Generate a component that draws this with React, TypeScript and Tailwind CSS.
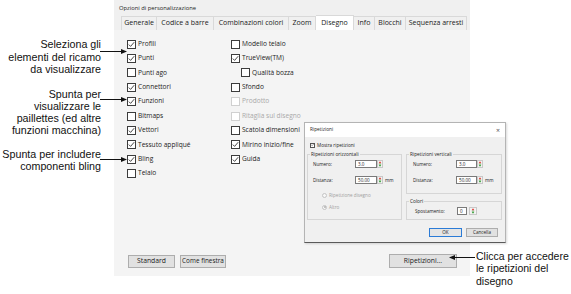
import React from 'react'

type CheckProps = { label: string; checked?: boolean; disabled?: boolean; indent?: boolean }

function Check({ label, checked = false, disabled = false, indent = false }: CheckProps) {
  return (
    <div className={`flex h-[14.4px] items-center ${indent ? 'pl-[10px]' : ''}`}>
      <span
        className={`flex h-[9px] w-[9px] shrink-0 items-center justify-center border bg-white ${
          disabled ? 'border-[#d0d0d0]' : 'border-[#3c3c3c]'
        }`}
      >
        {checked && (
          <svg width="7" height="7" viewBox="0 0 7 7">
            <polyline points="0.8,3.6 2.6,5.4 6.2,1.2" fill="none" stroke="#333" strokeWidth="0.9" />
          </svg>
        )}
      </span>
      <span className={`ml-[2px] whitespace-nowrap text-[6.6px] leading-none ${disabled ? 'text-[#a9a9a9]' : 'text-[#1c1c1c]'}`}>
        {label}
      </span>
    </div>
  )
}

function Spin({ wide = false }: { wide?: boolean }) {
  return (
    <span
      className={`flex h-[8px] flex-col items-center justify-center border border-[#c8c8c8] bg-[#f3f3f3] ${
        wide ? 'w-[8px]' : 'w-[6px]'
      }`}
    >
      <svg width="4" height="7" viewBox="0 0 4 7">
        <polygon points="2,0.3 3.6,2.6 0.4,2.6" fill="#e0302a" />
        <rect x="1.6" y="2.6" width="0.8" height="1.8" fill="#3a9a3a" />
        <polygon points="0.4,4.4 3.6,4.4 2,6.7" fill="#2e9a2e" />
      </svg>
    </span>
  )
}

function Field({ value, w }: { value: string; w: string }) {
  return (
    <span className={`flex h-[8px] items-center border border-[#7a7a7a] bg-white pl-[2px] text-[4.6px] text-[#222] ${w}`}>
      {value}
    </span>
  )
}

function Radio({ label, checked = false }: { label: string; checked?: boolean }) {
  return (
    <div className="flex h-[8px] items-center pl-[14px]">
      <span className="flex h-[5px] w-[5px] items-center justify-center rounded-full border border-[#c4c4c4] bg-[#f7f7f7]">
        {checked && <span className="h-[2px] w-[2px] rounded-full bg-[#b0b0b0]" />}
      </span>
      <span className="ml-[2px] text-[4.6px] text-[#a0a0a0]">{label}</span>
    </div>
  )
}

const tabs = [
  { name: 'Generale', w: 'w-[36px]' },
  { name: 'Codice a barre', w: 'w-[57px]' },
  { name: 'Combinazioni colori', w: 'w-[75px]' },
  { name: 'Zoom', w: 'w-[27px]' },
  { name: 'Disegno', w: 'w-[38px]', active: true },
  { name: 'Info', w: 'w-[21px]' },
  { name: 'Blocchi', w: 'w-[31px]' },
  { name: 'Sequenza arresti', w: 'w-[61px]' },
]

function RepeatsDialog() {
  return (
    <div className="absolute left-[190px] top-[122px] flex h-[121px] w-[202px] flex-col border border-[#b4b4b4] border-b-[#5a5a5a] font-['Open_Sans',sans-serif] shadow-[1px_1px_2px_rgba(0,0,0,0.15)]">
      {/* title bar */}
      <div className="flex h-[14px] items-center justify-between bg-white pl-[5px] pr-[5px]">
        <span className="text-[4.8px] text-[#222]">Ripetizioni</span>
        <span className="text-[7px] leading-none text-[#555]">×</span>
      </div>

      <div className="flex flex-1 flex-col bg-[#f0f0f0] px-[2px]">
        <div className="mt-[4px] flex h-[8px] items-center pl-[3px]">
          <span className="flex h-[5px] w-[5px] items-center justify-center border border-[#555] bg-white">
            <svg width="4" height="4" viewBox="0 0 4 4">
              <polyline points="0.4,2 1.5,3.1 3.6,0.7" fill="none" stroke="#333" strokeWidth="0.6" />
            </svg>
          </span>
          <span className="ml-[2px] text-[4.6px] text-[#222]">Mostra ripetizioni</span>
        </div>

        <div className="mt-[2px] flex">
          <fieldset className="h-[69px] w-[95px] border border-[#d6d6d6]">
            <legend className="ml-[2px] px-[1px] text-[4.8px] leading-[6px] text-[#222]">Ripetizioni orizzontali</legend>
            <div className="mt-[3px] flex h-[8px] items-center">
              <span className="w-[47px] pl-[5px] text-[4.6px] text-[#222]">Numero:</span>
              <Field value="3.0" w="w-[22px]" />
              <Spin />
            </div>
            <div className="mt-[8px] flex h-[8px] items-center">
              <span className="w-[47px] pl-[5px] text-[4.6px] text-[#222]">Distanza:</span>
              <Field value="50.00" w="w-[22px]" />
              <Spin />
              <span className="ml-[2px] text-[4.6px] text-[#222]">mm</span>
            </div>
            <div className="mt-[7px]">
              <Radio label="Ripetizione disegno" />
            </div>
            <div className="mt-[4px]">
              <Radio label="Altro" checked />
            </div>
          </fieldset>

          <div className="ml-[4px] flex w-[96px] flex-col">
            <fieldset className="h-[43px] border border-[#d6d6d6]">
              <legend className="ml-[2px] px-[1px] text-[4.8px] leading-[6px] text-[#222]">Ripetizioni verticali</legend>
              <div className="mt-[3px] flex h-[8px] items-center">
                <span className="w-[49px] pl-[6px] text-[4.6px] text-[#222]">Numero:</span>
                <Field value="3.0" w="w-[21px]" />
                <Spin />
              </div>
              <div className="mt-[8px] flex h-[8px] items-center">
                <span className="w-[49px] pl-[6px] text-[4.6px] text-[#222]">Distanza:</span>
                <Field value="50.00" w="w-[21px]" />
                <Spin />
                <span className="ml-[2px] text-[4.6px] text-[#222]">mm</span>
              </div>
            </fieldset>
            <fieldset className="mt-[4px] h-[22px] border border-[#d6d6d6]">
              <legend className="ml-[2px] px-[1px] text-[4.8px] leading-[6px] text-[#222]">Colori</legend>
              <div className="mt-[3px] flex h-[8px] items-center">
                <span className="w-[50px] pl-[8px] text-[4.6px] text-[#222]">Spostamento:</span>
                <Field value="0" w="w-[10px]" />
                <span className="ml-[2px]">
                  <Spin wide />
                </span>
              </div>
            </fieldset>
          </div>
        </div>

        <div className="mt-[8px] flex justify-end pr-[5px]">
          <span className="flex h-[9px] w-[33px] items-center justify-center border border-[#2b7bd6] bg-[#e5e5e5] text-[4.6px] text-[#222]">
            OK
          </span>
          <span className="ml-[4px] flex h-[9px] w-[32px] items-center justify-center border border-[#adadad] bg-[#e1e1e1] text-[4.6px] text-[#222]">
            Cancella
          </span>
        </div>
      </div>
    </div>
  )
}

export default function App() {
  const left: CheckProps[] = [
    { label: 'Profili', checked: true },
    { label: 'Punti', checked: true },
    { label: 'Punti ago' },
    { label: 'Connettori', checked: true },
    { label: 'Funzioni', checked: true },
    { label: 'Bitmaps' },
    { label: 'Vettori', checked: true },
    { label: 'Tessuto appliqué', checked: true },
    { label: 'Bling', checked: true },
    { label: 'Telaio' },
  ]
  const right: CheckProps[] = [
    { label: 'Modello telaio' },
    { label: 'TrueView(TM)', checked: true },
    { label: 'Qualità bozza', indent: true },
    { label: 'Sfondo' },
    { label: 'Prodotto', disabled: true },
    { label: 'Ritaglia sul disegno', disabled: true },
    { label: 'Scatola dimensioni' },
    { label: 'Mirino inizio/fine', checked: true },
    { label: 'Guida', checked: true },
  ]

  return (
    <div className="relative flex h-[294px] w-[571px] overflow-hidden bg-white">
      {/* Left callouts */}
      <div className="flex w-[114px] flex-col items-end pr-[13px] pt-[38px] text-right font-['Liberation_Sans',Arial,sans-serif] text-[10.7px] leading-[12.5px] text-[#111]">
        <p>
          Seleziona gli
          <br />
          elementi del ricamo
          <br />
          da visualizzare
        </p>
        <p className="mt-[12px] leading-[12px]">
          Spunta per
          <br />
          visualizzare le
          <br />
          paillettes (ed altre
          <br />
          funzioni macchina)
        </p>
        <p className="mt-[12px]">
          Spunta per includere
          <br />
          componenti bling
        </p>
      </div>

      {/* Main dialog */}
      <div className="relative flex h-[276px] w-[356px] flex-col bg-[#f0f0f0] font-['Open_Sans',sans-serif]">
        <div className="flex h-[16px] items-center pl-[5px] text-[5.8px] text-[#222]">Opzioni di personalizzazione</div>
        <div className="ml-[7px] flex h-[14px] w-[346px] border-b border-[#d9d9d9]">
          {tabs.map((t) => (
            <div
              key={t.name}
              className={`flex items-center justify-center whitespace-nowrap border-r border-t border-[#d9d9d9] text-[7px] text-[#1a1a1a] first:border-l ${t.w} ${
                t.active ? '-mt-[1px] h-[15px] bg-white' : 'h-[14px] bg-[#f0f0f0]'
              }`}
            >
              {t.name}
            </div>
          ))}
        </div>

        <div className="flex flex-1 flex-col bg-[#f4f4f4] pt-[7px]">
          <div className="flex pl-[13px]">
            <div className="flex w-[104px] flex-col">
              {left.map((c) => (
                <Check key={c.label} {...c} />
              ))}
            </div>
            <div className="flex flex-col">
              {right.map((c) => (
                <Check key={c.label} {...c} />
              ))}
            </div>
          </div>

          <div className="mt-auto mb-[8px] flex items-center pl-[14px] pr-[13px]">
            <span className="flex h-[13px] w-[47px] items-center justify-center border border-[#adadad] bg-[#e1e1e1] text-[6.8px] text-[#1a1a1a]">
              Standard
            </span>
            <span className="ml-[5px] flex h-[13px] w-[46px] items-center justify-center whitespace-nowrap border border-[#adadad] bg-[#e1e1e1] text-[6.4px] text-[#1a1a1a]">
              Come finestra
            </span>
            <span className="ml-auto flex h-[14px] w-[68px] items-center justify-center border border-[#adadad] bg-[#e1e1e1] text-[6.8px] text-[#1a1a1a]">
              Ripetizioni...
            </span>
          </div>
        </div>

        <RepeatsDialog />
      </div>

      {/* Right callout */}
      <div className="pl-[6px] pt-[250px] font-['Liberation_Sans',Arial,sans-serif] text-[10.5px] leading-[12.3px] text-[#111]">
        Clicca per accedere
        <br />
        le ripetizioni del
        <br />
        disegno
      </div>

      {/* Leader lines */}
      <svg className="pointer-events-none absolute left-0 top-0" width="571" height="294">
        <g stroke="#111" strokeWidth="1">
          <line x1="100" y1="51.5" x2="123" y2="51.5" />
          <line x1="100" y1="99.5" x2="123" y2="99.5" />
          <line x1="100" y1="159.5" x2="123" y2="159.5" />
          <line x1="454" y1="257.5" x2="475" y2="257.5" />
        </g>
        <g fill="#111">
          <polygon points="127,51.5 121,49 121,54" />
          <polygon points="127,99.5 121,97 121,102" />
          <polygon points="127,159.5 121,157 121,162" />
          <polygon points="449,257.5 455,255 455,260" />
        </g>
      </svg>
    </div>
  )
}
